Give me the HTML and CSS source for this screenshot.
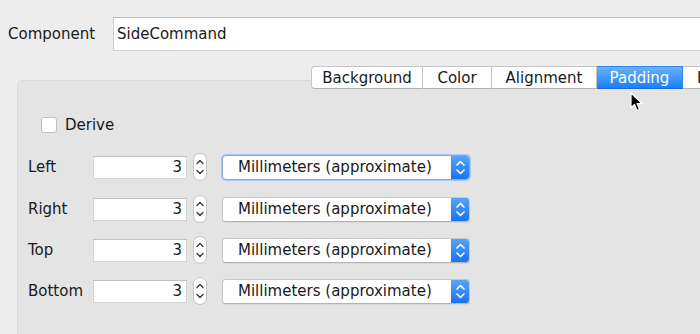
FILE: index.html
```html
<!DOCTYPE html>
<html>
<head>
<meta charset="utf-8">
<link rel="stylesheet" href="styles.css">
</head>
<body>
<div class="win">
  <div class="top">
    <span class="top-label">Component</span>
    <div class="name-field">SideCommand</div>
  </div>
  <div class="tabs">
    <div class="tab first">Background</div>
    <div class="tab">Color</div>
    <div class="tab">Alignment</div>
    <div class="tab sel">Padding</div>
    <div class="tab">Border</div>
  </div>
  <div class="panel">
    <div class="derive"><span class="cb"></span><span>Derive</span></div>
    <div class="rows">
      <div class="row">
        <span class="rl">Left</span>
        <div class="num">3</div>
        <div class="spin"><svg width="14" height="28" viewBox="0 0 14 28"><path d="M4 10.5 L7 7.5 L10 10.5 M4 17.5 L7 20.5 L10 17.5" fill="none" stroke="#333" stroke-width="1.3" stroke-linecap="round" stroke-linejoin="round"/></svg></div>
        <div class="select focus"><span class="sv">Millimeters (approximate)</span><span class="arr"><svg width="19" height="25" viewBox="0 0 19 25"><path d="M6 10 L9.5 6.5 L13 10 M6 15 L9.5 18.5 L13 15" fill="none" stroke="#fff" stroke-width="1.6" stroke-linecap="round" stroke-linejoin="round"/></svg></span></div>
      </div>
      <div class="row">
        <span class="rl">Right</span>
        <div class="num">3</div>
        <div class="spin"><svg width="14" height="28" viewBox="0 0 14 28"><path d="M4 10.5 L7 7.5 L10 10.5 M4 17.5 L7 20.5 L10 17.5" fill="none" stroke="#333" stroke-width="1.3" stroke-linecap="round" stroke-linejoin="round"/></svg></div>
        <div class="select"><span class="sv">Millimeters (approximate)</span><span class="arr"><svg width="19" height="25" viewBox="0 0 19 25"><path d="M6 10 L9.5 6.5 L13 10 M6 15 L9.5 18.5 L13 15" fill="none" stroke="#fff" stroke-width="1.6" stroke-linecap="round" stroke-linejoin="round"/></svg></span></div>
      </div>
      <div class="row">
        <span class="rl">Top</span>
        <div class="num">3</div>
        <div class="spin"><svg width="14" height="28" viewBox="0 0 14 28"><path d="M4 10.5 L7 7.5 L10 10.5 M4 17.5 L7 20.5 L10 17.5" fill="none" stroke="#333" stroke-width="1.3" stroke-linecap="round" stroke-linejoin="round"/></svg></div>
        <div class="select"><span class="sv">Millimeters (approximate)</span><span class="arr"><svg width="19" height="25" viewBox="0 0 19 25"><path d="M6 10 L9.5 6.5 L13 10 M6 15 L9.5 18.5 L13 15" fill="none" stroke="#fff" stroke-width="1.6" stroke-linecap="round" stroke-linejoin="round"/></svg></span></div>
      </div>
      <div class="row">
        <span class="rl">Bottom</span>
        <div class="num">3</div>
        <div class="spin"><svg width="14" height="28" viewBox="0 0 14 28"><path d="M4 10.5 L7 7.5 L10 10.5 M4 17.5 L7 20.5 L10 17.5" fill="none" stroke="#333" stroke-width="1.3" stroke-linecap="round" stroke-linejoin="round"/></svg></div>
        <div class="select"><span class="sv">Millimeters (approximate)</span><span class="arr"><svg width="19" height="25" viewBox="0 0 19 25"><path d="M6 10 L9.5 6.5 L13 10 M6 15 L9.5 18.5 L13 15" fill="none" stroke="#fff" stroke-width="1.6" stroke-linecap="round" stroke-linejoin="round"/></svg></span></div>
      </div>
    </div>
  </div>
  <svg class="cursor" width="14" height="22" viewBox="0 0 14 22"><path d="M1 1 L1 16 L4.5 12.5 L7 18.5 L9.5 17.5 L7 11.5 L12 11.5 Z" fill="#000" stroke="#fff" stroke-width="1.2" stroke-linejoin="round"/></svg>
</div>
</body>
</html>
```

FILE: styles.css
```css
html, body {
  margin: 0;
  padding: 0;
  background: #ededed;
}
body {
  width: 700px;
  height: 334px;
  overflow: hidden;
  font-family: "DejaVu Sans", "Open Sans", sans-serif;
  font-size: 14px;
  color: #1a1a1a;
}
.win {
  position: relative;
  width: 700px;
  height: 334px;
  overflow: hidden;
}
.top {
  display: flex;
  align-items: center;
  padding-top: 17px;
}
.top-label {
  width: 105px;
  padding-left: 8px;
  font-size: 15px;
}
.name-field {
  flex: 1;
  height: 34px;
  margin-right: -4px;
  box-sizing: border-box;
  background: #fff;
  border: 1px solid #cfcfcf;
  border-top-color: #bdbdbd;
  padding-left: 3px;
  display: flex;
  align-items: center;
  font-size: 15px;
}
.tabs {
  display: flex;
  margin-top: 15px;
  margin-left: 311px;
  height: 23px;
  position: relative;
  z-index: 2;
  white-space: nowrap;
}
.tab {
  flex: none;
  height: 23px;
  box-sizing: border-box;
  background: #fff;
  border: 1px solid #c6c6c6;
  border-left: none;
  border-bottom-color: #b0b0b0;
  display: flex;
  align-items: center;
  justify-content: center;
  font-size: 15px;
  color: #1a1a1a;
}
.tab:nth-child(1) { width: 112px; }
.tab:nth-child(2) { width: 69px; }
.tab:nth-child(3) { width: 105px; }
.tab:nth-child(4) { width: 86px; }
.tab:nth-child(5) { width: 80px; justify-content: flex-start; padding-left: 14px; }
.tab.first {
  border-left: 1px solid #c6c6c6;
  border-radius: 4px 0 0 4px;
}
.tab.sel {
  background: linear-gradient(#69b1fa, #1a7ff8);
  border-color: #2f86f0;
  border-bottom-color: #1d6bd8;
  color: #fff;
}
.panel {
  margin-top: -9px;
  margin-left: 17px;
  height: 300px;
  margin-right: -10px;
  background: #e4e4e4;
  border: 1px solid #dadada;
  border-radius: 5px;
  padding: 35px 0 0 10px;
  box-sizing: border-box;
  position: relative;
  z-index: 1;
}
.derive {
  display: flex;
  align-items: center;
  gap: 8px;
  margin-left: 13px;
  font-size: 15px;
  height: 18px;
}
.cb {
  width: 16px;
  height: 16px;
  box-sizing: border-box;
  background: #fff;
  border: 1px solid #c2c2c2;
  border-radius: 3px;
}
.rows {
  display: flex;
  flex-direction: column;
  gap: 15px;
  margin-top: 20px;
}
.row {
  display: flex;
  align-items: center;
  height: 26px;
}
.row:first-child {
  margin-bottom: 1px;
}
.rl {
  width: 65px;
  font-size: 15px;
}
.num {
  width: 94px;
  height: 23px;
  box-sizing: border-box;
  background: #fff;
  border: 1px solid #d2d2d2;
  border-top-color: #bfbfbf;
  text-align: right;
  padding-right: 4px;
  line-height: 21px;
  font-size: 15px;
}
.spin {
  width: 14px;
  height: 28px;
  margin-left: 6px;
  box-sizing: border-box;
  background: #fff;
  border: 1px solid #c4c4c4;
  border-radius: 7px;
  display: flex;
}
.spin svg {
  margin: -1px;
}
.select {
  width: 248px;
  height: 25px;
  margin-left: 15px;
  box-sizing: border-box;
  background: #fff;
  border: 1px solid #c6c6c6;
  border-bottom-color: #b3b3b3;
  border-radius: 4px;
  display: flex;
  align-items: center;
  overflow: hidden;
  box-shadow: 0 1px 0 rgba(0,0,0,0.05);
}
.select.focus {
  border-color: #82acdf;
  box-shadow: 0 0 0 1px #a9c8ef;
}
.sv {
  flex: 1;
  padding-left: 15px;
  font-size: 15px;
  white-space: nowrap;
}
.arr {
  width: 19px;
  height: 25px;
  margin: -1px -1px -1px 0;
  background: linear-gradient(#5aa7f8, #1472f0);
  border-radius: 0 4px 4px 0;
  display: flex;
}
.cursor {
  position: absolute;
  left: 630px;
  top: 92px;
  z-index: 5;
}
```
